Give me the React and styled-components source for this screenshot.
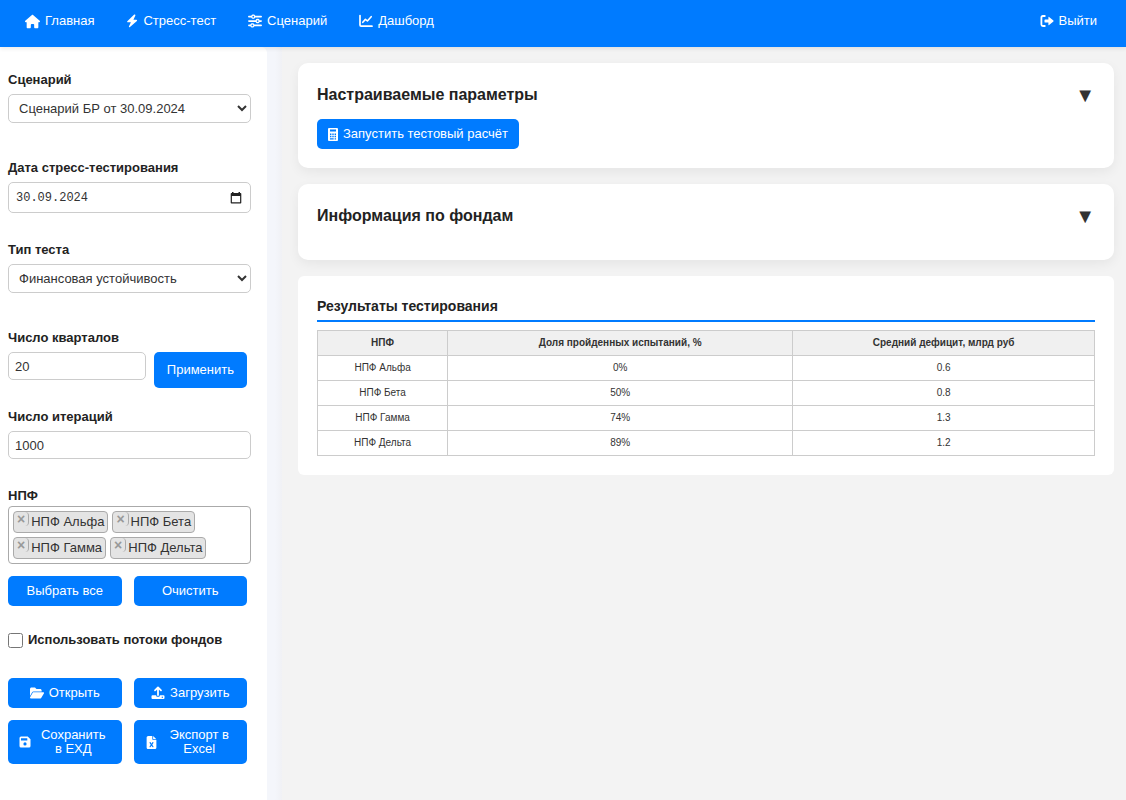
import React, { useState } from 'react'
import styled, { createGlobalStyle, css } from 'styled-components'
import {
  FaHouse,
  FaSliders,
  FaFolderOpen,
  FaFileExcel
} from 'react-icons/fa6'

const GlobalStyle = createGlobalStyle`
  * {
    box-sizing: border-box;
  }

  body {
    margin: 0;
    background-color: #f3f3f3;
    color: #222;
    font-family: 'Liberation Sans', Arial, sans-serif;
    font-size: 13px;
    line-height: 16px;
  }

  button, input, select {
    font-family: inherit;
  }
`

const Page = styled.div`
  display: flex;
  flex-direction: column;
  min-height: 100vh;
`

const NavBar = styled.nav`
  position: relative;
  z-index: 1;
  display: flex;
  align-items: center;
  gap: 32px;
  padding: 13px 29px 18px 25px;
  background-color: #007bff;
  box-shadow: 0 2px 4px rgba(0, 0, 0, 0.08);
`

const NavLink = styled.a`
  display: flex;
  align-items: center;
  gap: 5px;
  color: #fff;
  text-decoration: none;
  ${({ $right }) => $right && css`
    margin-left: auto;
  `}
`

const Body = styled.div`
  display: flex;
  flex: 1;
`

const Sidebar = styled.aside`
  flex: 0 0 282px;
  display: flex;
  padding-right: 15px;
  background: linear-gradient(to right, #f4f6fb 275px, #f0f1f5 282px);
`

const Panel = styled.form`
  flex: 1;
  padding: 25px 16px 25px 8px;
  background-color: #fff;
  border-top-right-radius: 6px;
`

const Field = styled.div`
  display: flow-root;
  margin-bottom: 21px;
`

const Label = styled.label`
  display: block;
  margin-bottom: ${({ $tight }) => ($tight ? 2 : 6)}px;
  font-weight: bold;
`

const control = css`
  display: block;
  width: 100%;
  border: 1px solid #ccc;
  border-radius: 5px;
  background-color: #fff;
  color: #333;
  font-size: 13px;
`

const Select = styled.select`
  ${control}
  height: 29px;
  margin-bottom: 16px;
  padding: 0 0 0 6px;
`

const Input = styled.input`
  ${control}
  height: 28px;
  margin-bottom: 8px;
  padding: 0 6px;
`

const DateBox = styled.div`
  ${control}
  display: flex;
  align-items: center;
  height: 31px;
  margin-bottom: 8px;
  padding: 0 8px 0 7px;
`

const DateInput = styled.input`
  flex: 1;
  min-width: 0;
  padding: 0;
  border: 0;
  color: #333;
  font-family: 'Liberation Mono', monospace;
  font-size: 12px;
`

const IconButton = styled.button`
  display: flex;
  padding: 0;
  border: 0;
  background: none;
  color: #222;
  cursor: pointer;
`

const Row = styled.div`
  display: flex;
  align-items: flex-start;
  gap: 8px;
  padding-right: 4px;
`

const Button = styled.button`
  display: flex;
  align-items: center;
  justify-content: center;
  gap: 5px;
  min-height: ${({ $tall }) => ($tall ? 36 : 30)}px;
  padding: 8px ${({ $tall }) => ($tall ? 13 : 11)}px;
  border: 0;
  border-radius: 5px;
  background-color: #007bff;
  color: #fff;
  font-size: 13px;
  line-height: 14px;
  cursor: pointer;

  svg {
    flex-shrink: 0;
  }
`

const ButtonGrid = styled.div`
  display: grid;
  grid-template-columns: 1fr 1fr;
  gap: 12px;
  padding-right: 4px;
`

const TagBox = styled.div`
  display: flex;
  flex-wrap: wrap;
  align-content: flex-start;
  gap: 4px;
  min-height: 57px;
  margin-bottom: 12px;
  padding: 4px;
  border: 1px solid #aaa;
  border-radius: 4px;
`

const Tag = styled.span`
  display: flex;
  height: 22px;
  border: 1px solid #aaa;
  border-radius: 4px;
  background-color: #e4e4e4;
  color: #333;
  line-height: 20px;
  padding-right: 3px;
`

const TagRemove = styled.button`
  height: 14px;
  margin-right: 2px;
  padding: 0 3px;
  border: 0;
  border-right: 1px solid #aaa;
  border-radius: 4px;
  background: none;
  color: #999;
  font-size: 14px;
  font-weight: bold;
  line-height: 14px;
  cursor: pointer;
`

const CheckRow = styled.label`
  display: flex;
  align-items: center;
  gap: 5px;
  margin: 26px 0 30px;
  font-weight: bold;
`

const Checkbox = styled.input`
  width: 15px;
  height: 15px;
  margin: 0;
`

const Main = styled.main`
  flex: 1;
  min-width: 0;
  display: flex;
  flex-direction: column;
  gap: 16px;
  padding: 16px 12px 16px 16px;
`

const Card = styled.section`
  padding: ${({ $flat }) => ($flat ? 22 : 20)}px 19px 19px;
  border-radius: ${({ $flat }) => ($flat ? 6 : 10)}px;
  background-color: #fff;
  ${({ $flat }) => !$flat && css`
    min-height: 76px;
    box-shadow: 0 4px 12px rgba(0, 0, 0, 0.06);
  `}
`

const CardHeader = styled.div`
  display: flex;
  align-items: center;
  justify-content: space-between;
  height: 24px;
  margin-bottom: 12px;
`

const CardTitle = styled.h2`
  margin: 0;
  font-size: 16px;
  line-height: 24px;
`

const ResultsTitle = styled.h3`
  margin: 0 0 8px;
  padding-bottom: 6px;
  border-bottom: 2px solid #007bff;
  font-size: 14px;
  line-height: 16px;
`

const Toggle = styled(IconButton)`
  color: #333;
  font-size: 20px;
  line-height: 22px;
`

const Table = styled.table`
  width: 100%;
  border-collapse: collapse;
  color: #333;
  font-size: 10px;
  line-height: 12px;
  text-align: center;

  th, td {
    height: 25px;
    padding: 0 3px;
    border: 1px solid #ccc;
  }

  th {
    background-color: #f0f0f0;
  }
`

const BoltIcon = () => (
  <svg width="12" height="14" viewBox="0 0 12 14" aria-hidden="true">
    <path d="M8.2.5 1.300 7.200q-.6.8.3 1H4.900L2.900 12.500q-.1 1 .8.8L10.900 6.900q.6-.9-.4-1.100H7.400L9.400 1.500Q9.600.2 8.200.5Z" fill="currentColor" />
  </svg>
)

const ChartIcon = () => (
  <svg width="14" height="14" viewBox="0 0 14 14" fill="none" stroke="currentColor" strokeLinecap="round" strokeLinejoin="round" aria-hidden="true">
    <path d="M1 1.5v9.6q0 1.1 1.1 1.1H13" strokeWidth="1.7" />
    <path d="M3.8 8.3 6.4 5.4l2 1.6 3.8-4.3" strokeWidth="1.6" />
  </svg>
)

const LogoutIcon = () => (
  <svg width="14" height="14" viewBox="0 0 14 14" aria-hidden="true">
    <path d="M4.8 2H2.9Q1.4 2 1.4 3.5v7Q1.4 12 2.9 12h1.9" fill="none" stroke="currentColor" strokeWidth="1.8" strokeLinecap="round" />
    <path d="M8.4 3.3v2.1H5.2q-.7 0-.7.7v1.8q0 .7.7.7h3.2v2.1q0 .8.7.3l4.3-3.5q.4-.5 0-1L9.1 3q-.7-.5-.7.3Z" fill="currentColor" />
  </svg>
)

const CalculatorIcon = () => (
  <svg width="10" height="13" viewBox="0 0 10 13" aria-hidden="true">
    <rect width="10" height="13" rx="1" fill="currentColor" />
    <path d="M2 1.500h6v2H2ZM2 5.500h1.400v1.400H2Zm2.300 0h1.400v1.400H4.300Zm2.300 0H8v1.400H6.600ZM2 7.800h1.400v1.400H2Zm2.300 0h1.400v1.400H4.300Zm2.300 0H8v1.400H6.600ZM2 10.200h3.700v1.300H2Zm4.600 0H8v1.300H6.600Z" fill="#007bff" />
  </svg>
)

const UploadIcon = () => (
  <svg width="14" height="14" viewBox="0 0 14 14" aria-hidden="true">
    <path d="M7 9V2M4 4.4 7 1.5l3 2.9" fill="none" stroke="currentColor" strokeWidth="1.8" strokeLinecap="round" strokeLinejoin="round" />
    <path d="M1.5 9.2h3.7v.5q0 1 1 1h1.6q1 0 1-1v-.5h3.7q1 0 1 1v1.9q0 1-1 1h-11q-1 0-1-1v-1.9q0-1 1-1Z" fill="currentColor" />
    <circle cx="11.3" cy="11.2" r=".7" fill="#007bff" />
  </svg>
)

const SaveIcon = () => (
  <svg width="12" height="12" viewBox="0 0 12 12" aria-hidden="true">
    <path fillRule="evenodd" d="M2 .5h6.7L11.5 3.3V10q0 1.5-1.5 1.5H2Q.5 11.5.5 10V2Q.5.5 2 .5Zm0 1.8v2.2h6.3V2.3ZM6 6.3a1.6 1.6 0 1 0 0 3.2 1.6 1.6 0 0 0 0-3.2Z" fill="currentColor" />
  </svg>
)

const CalendarIcon = () => (
  <svg width="12" height="12" viewBox="0 0 12 12" aria-hidden="true">
    <path fillRule="evenodd" d="M2 0h1.5v1h5V0H10v1h.5q.8 0 .8.8v8.9q0 .8-.8.8h-9q-.8 0-.8-.8V1.800Q.7 1 1.500 1H2Zm-.1 3.900v6.400h8.200V3.900Z" fill="currentColor" />
  </svg>
)

const RESULTS = [
  { fund: 'НПФ Альфа', share: '0%', deficit: '0.6' },
  { fund: 'НПФ Бета', share: '50%', deficit: '0.8' },
  { fund: 'НПФ Гамма', share: '74%', deficit: '1.3' },
  { fund: 'НПФ Дельта', share: '89%', deficit: '1.2' }
]

const FUNDS = RESULTS.map(r => r.fund)

const Nav = () => (
  <NavBar>
    <NavLink href="#main"><FaHouse size={15} />Главная</NavLink>
    <NavLink href="#stress"><BoltIcon />Стресс-тест</NavLink>
    <NavLink href="#scenario"><FaSliders size={14} />Сценарий</NavLink>
    <NavLink href="#dashboard"><ChartIcon />Дашборд</NavLink>
    <NavLink href="#logout" $right><LogoutIcon />Выйти</NavLink>
  </NavBar>
)

const Settings = () => {
  const [funds, setFunds] = useState(FUNDS)
  return (
    <Sidebar>
      <Panel onSubmit={e => e.preventDefault()}>
        <Field>
          <Label htmlFor="scenario">Сценарий</Label>
          <Select id="scenario">
            <option>Сценарий БР от 30.09.2024</option>
          </Select>
        </Field>
        <Field>
          <Label htmlFor="date">Дата стресс-тестирования</Label>
          <DateBox>
            <DateInput id="date" defaultValue="30.09.2024" />
            <IconButton type="button" aria-label="Календарь"><CalendarIcon /></IconButton>
          </DateBox>
        </Field>
        <Field>
          <Label htmlFor="type">Тип теста</Label>
          <Select id="type">
            <option>Финансовая устойчивость</option>
          </Select>
        </Field>
        <Field>
          <Label htmlFor="quarters">Число кварталов</Label>
          <Row>
            <Input id="quarters" defaultValue="20" />
            <Button type="button" $tall>Применить</Button>
          </Row>
        </Field>
        <Field>
          <Label htmlFor="iterations">Число итераций</Label>
          <Input id="iterations" defaultValue="1000" />
        </Field>
        <Label as="div" $tight>НПФ</Label>
        <TagBox>
          {funds.map(name => (
            <Tag key={name}>
              <TagRemove
                type="button"
                aria-label={`Убрать ${name}`}
                onClick={() => setFunds(funds.filter(f => f !== name))}
              >
                ×
              </TagRemove>
              {name}
            </Tag>
          ))}
        </TagBox>
        <ButtonGrid>
          <Button type="button" onClick={() => setFunds(FUNDS)}>Выбрать все</Button>
          <Button type="button" onClick={() => setFunds([])}>Очистить</Button>
        </ButtonGrid>
        <CheckRow>
          <Checkbox type="checkbox" />
          Использовать потоки фондов
        </CheckRow>
        <ButtonGrid>
          <Button type="button"><FaFolderOpen size={14} />Открыть</Button>
          <Button type="button"><UploadIcon />Загрузить</Button>
          <Button type="button"><SaveIcon /><span>Сохранить в ЕХД</span></Button>
          <Button type="button"><FaFileExcel size={13} /><span>Экспорт в Excel</span></Button>
        </ButtonGrid>
      </Panel>
    </Sidebar>
  )
}

const Results = () => (
  <Card $flat>
    <ResultsTitle>Результаты тестирования</ResultsTitle>
    <Table>
      <thead>
        <tr>
          <th>НПФ</th>
          <th>Доля пройденных испытаний, %</th>
          <th>Средний дефицит, млрд руб</th>
        </tr>
      </thead>
      <tbody>
        {RESULTS.map(row => (
          <tr key={row.fund}>
            <td>{row.fund}</td>
            <td>{row.share}</td>
            <td>{row.deficit}</td>
          </tr>
        ))}
      </tbody>
    </Table>
  </Card>
)

const App = () => (
  <>
    <GlobalStyle />
    <Page>
      <Nav />
      <Body>
        <Settings />
        <Main>
          <Card>
            <CardHeader>
              <CardTitle>Настраиваемые параметры</CardTitle>
              <Toggle type="button" aria-label="Свернуть">▼</Toggle>
            </CardHeader>
            <Button type="button"><CalculatorIcon />Запустить тестовый расчёт</Button>
          </Card>
          <Card>
            <CardHeader>
              <CardTitle>Информация по фондам</CardTitle>
              <Toggle type="button" aria-label="Развернуть">▼</Toggle>
            </CardHeader>
          </Card>
          <Results />
        </Main>
      </Body>
    </Page>
  </>
)

export default App
